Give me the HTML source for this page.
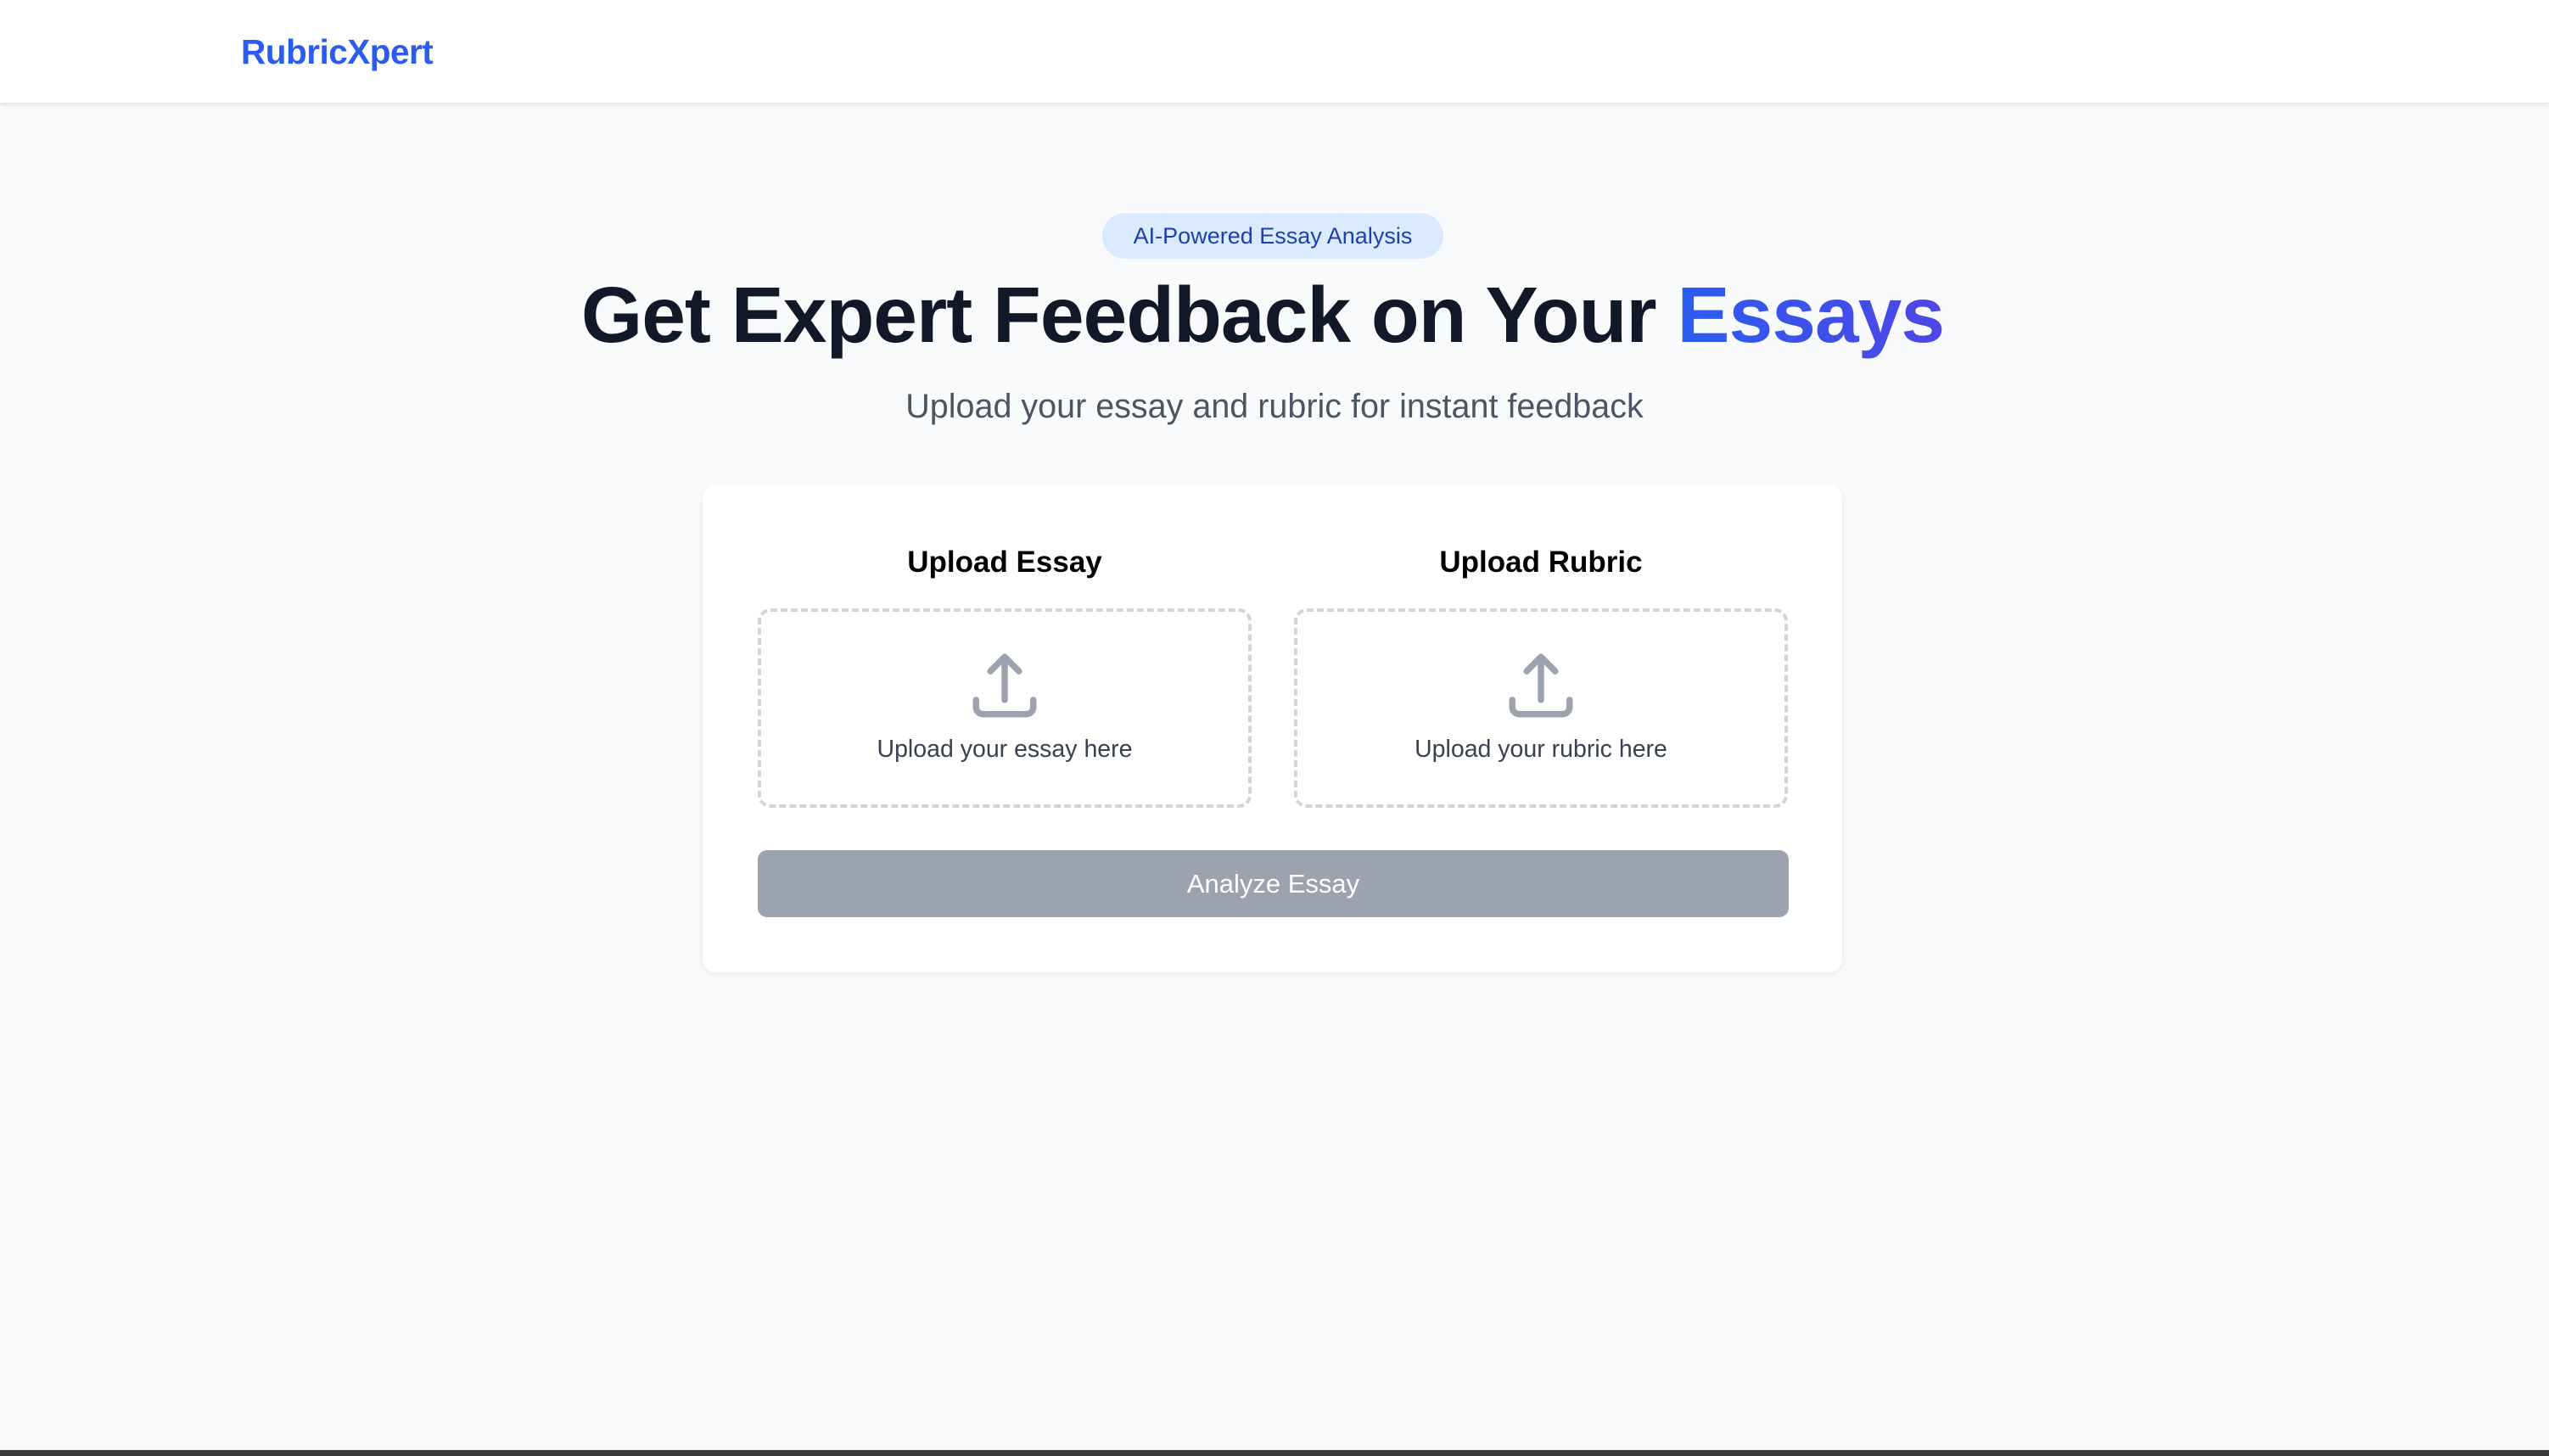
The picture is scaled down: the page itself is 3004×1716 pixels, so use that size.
<!DOCTYPE html>
<html><head><meta charset="utf-8">
<style>
*{margin:0;padding:0;box-sizing:border-box}
html,body{width:3004px;height:1716px;overflow:hidden;background:#f9fafb;font-family:"Liberation Sans",sans-serif}
.hdr{position:absolute;left:0;top:0;width:3004px;height:121px;background:#fff;box-shadow:0 2px 6px rgba(0,0,0,.12)}
.logo{position:absolute;left:284px;top:38px;font-size:40.5px;font-weight:700;color:#2b5cf0;letter-spacing:-.5px}
.badge{position:absolute;left:1299px;top:251px;width:402px;height:54px;border-radius:27px;background:#dbeafe;color:#1e40af;font-size:27px;line-height:54px;text-align:center}
h1{position:absolute;left:-14px;width:3004px;top:316px;text-align:center;font-size:93px;font-weight:700;color:#111827;letter-spacing:-1px;line-height:110px}
h1 span{background:linear-gradient(90deg,#2b5cf0,#4f46e5);-webkit-background-clip:text;background-clip:text;color:transparent}
.sub{position:absolute;left:0;width:3004px;top:454px;text-align:center;font-size:39.5px;color:#4b5563;line-height:50px}
.card{position:absolute;left:828px;top:571px;width:1343px;height:575px;background:#fff;border-radius:15px;box-shadow:0 2px 6px rgba(0,0,0,.08)}
.t{position:absolute;width:582px;text-align:center;top:70px;font-size:35px;font-weight:700;color:#000;line-height:44px}
.dz{position:absolute;top:146px;width:582px;height:235px;border:4px dashed #d1d5db;border-radius:15px}
.dz svg{position:absolute;left:242px;top:42px}
.dz p{position:absolute;left:0;width:100%;top:146px;text-align:center;font-size:28.5px;color:#374151}
.btn{position:absolute;left:65px;top:431px;width:1215px;height:79px;border-radius:11px;background:#9ca3af;color:#fff;font-size:31px;line-height:79px;text-align:center}
.bar{position:absolute;left:0;top:1709px;width:3004px;height:7px;background:#383838}
</style></head><body>
<div class="hdr"><div class="logo">RubricXpert</div></div>
<div class="badge">AI-Powered Essay Analysis</div>
<h1>Get Expert Feedback on Your <span>Essays</span></h1>
<div class="sub">Upload your essay and rubric for instant feedback</div>
<div class="card">
  <div class="t" style="left:65px">Upload Essay</div>
  <div class="t" style="left:697px">Upload Rubric</div>
  <div class="dz" style="left:65px">
    <svg width="90" height="90" viewBox="0 0 24 24" fill="none" stroke="#9ca3af" stroke-width="2" stroke-linecap="round" stroke-linejoin="round"><path d="M3 16.5v2.25A2.25 2.25 0 005.25 21h13.5A2.25 2.25 0 0021 18.75V16.5M7.5 7.5L12 3m0 0l4.5 4.5M12 3v13.5"/></svg>
    <p>Upload your essay here</p>
  </div>
  <div class="dz" style="left:697px">
    <svg width="90" height="90" viewBox="0 0 24 24" fill="none" stroke="#9ca3af" stroke-width="2" stroke-linecap="round" stroke-linejoin="round"><path d="M3 16.5v2.25A2.25 2.25 0 005.25 21h13.5A2.25 2.25 0 0021 18.75V16.5M7.5 7.5L12 3m0 0l4.5 4.5M12 3v13.5"/></svg>
    <p>Upload your rubric here</p>
  </div>
  <div class="btn">Analyze Essay</div>
</div>
<div class="bar"></div>
</body></html>
